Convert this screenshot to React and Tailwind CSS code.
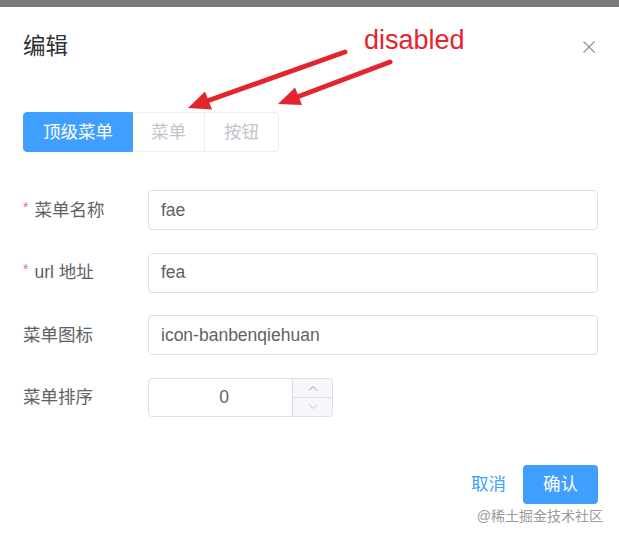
import React from 'react';

const Field = ({ label, required, children }) => (
  <div className="flex items-center h-[40px]">
    <div className="w-[125px] flex items-center text-[#606266]">
      {required && <span className="text-[#f56c6c] text-[14px] mr-[6px] -mt-[6px]">*</span>}
      <span>{label}</span>
    </div>
    {children}
  </div>
);

const TextInput = ({ value }) => (
  <div className="flex-1 mr-[21px] h-[40px] border border-[#dcdfe6] rounded-[4px] px-[12px] flex items-center text-[#606266]">
    {value}
  </div>
);

const NumberInput = ({ value }) => (
  <div className="w-[185px] h-[39px] border border-[#dcdfe6] rounded-[4px] flex text-[#606266]">
    <div className="flex-1 flex items-center justify-center pl-[7px]">{value}</div>
    <div className="w-[40px] border-l border-[#dcdfe6] bg-[#f5f7fa] flex flex-col rounded-r-[4px]">
      <div className="flex-1 border-b border-[#dcdfe6] flex items-center justify-center">
        <svg width="10" height="6" viewBox="0 0 10 6" fill="none" stroke="#909399" strokeWidth="1">
          <polyline points="1,5.5 5,1.5 9,5.5" />
        </svg>
      </div>
      <div className="flex-1 flex items-center justify-center">
        <svg width="10" height="6" viewBox="0 0 10 6" fill="none" stroke="#c0c4cc" strokeWidth="1">
          <polyline points="1,0.5 5,4.5 9,0.5" />
        </svg>
      </div>
    </div>
  </div>
);

const Annotation = () => (
  <>
    <div className="absolute left-[364px] top-[27px] text-[27px] leading-none text-[#e3262e]">disabled</div>
    <svg className="absolute left-0 top-0 pointer-events-none" width="619" height="140" viewBox="0 0 619 140">
      <g stroke="#e3262e" strokeWidth="5" strokeLinecap="round" fill="#e3262e">
        <line x1="345" y1="52" x2="207" y2="101" />
        <line x1="390" y1="62" x2="297" y2="97" />
      </g>
      <g fill="#e3262e">
        <polygon points="188,108 212,109.5 205,91.5" />
        <polygon points="278,104 302,105 295,87.5" />
      </g>
    </svg>
  </>
);

export default function App() {
  return (
    <div className="relative w-[619px] h-[540px] bg-white overflow-hidden font-['Liberation_Sans','Noto_Sans_CJK_SC',sans-serif] text-[17.5px]">
      <div className="h-[7px] bg-[#7a7a7a]" />

      <div className="flex items-center justify-between pl-[23px] pr-[24px] pt-[26px] h-[54px]">
        <h2 className="text-[22.5px] leading-[28px] text-[#303133]">编辑</h2>
        <svg width="12" height="12" viewBox="0 0 12 12" stroke="#909399" strokeWidth="1.2">
          <line x1="0.5" y1="0.5" x2="11.5" y2="11.5" />
          <line x1="11.5" y1="0.5" x2="0.5" y2="11.5" />
        </svg>
      </div>

      <div className="px-[23px] mt-[51px] flex">
        <div className="w-[110px] h-[40px] flex items-center justify-center bg-[#409eff] border border-[#409eff] text-white rounded-l-[4px]">顶级菜单</div>
        <div className="w-[72px] h-[40px] flex items-center justify-center border-y border-r border-[#ebeef5] text-[#c0c4cc]">菜单</div>
        <div className="w-[74px] h-[40px] flex items-center justify-center border-y border-r border-[#ebeef5] text-[#c0c4cc] rounded-r-[4px]">按钮</div>
      </div>

      <div className="pl-[23px] mt-[38px] flex flex-col gap-[22.5px]">
        <Field label="菜单名称" required>
          <TextInput value="fae" />
        </Field>
        <Field label="url 地址" required>
          <TextInput value="fea" />
        </Field>
        <Field label="菜单图标">
          <TextInput value="icon-banbenqiehuan" />
        </Field>
        <Field label="菜单排序">
          <NumberInput value="0" />
        </Field>
      </div>

      <div className="mt-[47px] flex items-center justify-end pr-[21px]">
        <button className="text-[#409eff]">取消</button>
        <button className="ml-[17px] w-[75px] h-[39px] bg-[#409eff] rounded-[4px] text-white">确认</button>
      </div>

      <div className="mt-[3px] pr-[16px] text-right text-[14px] leading-[18px] text-[#9a9a9a]">@稀土掘金技术社区</div>

      <Annotation />
    </div>
  );
}
